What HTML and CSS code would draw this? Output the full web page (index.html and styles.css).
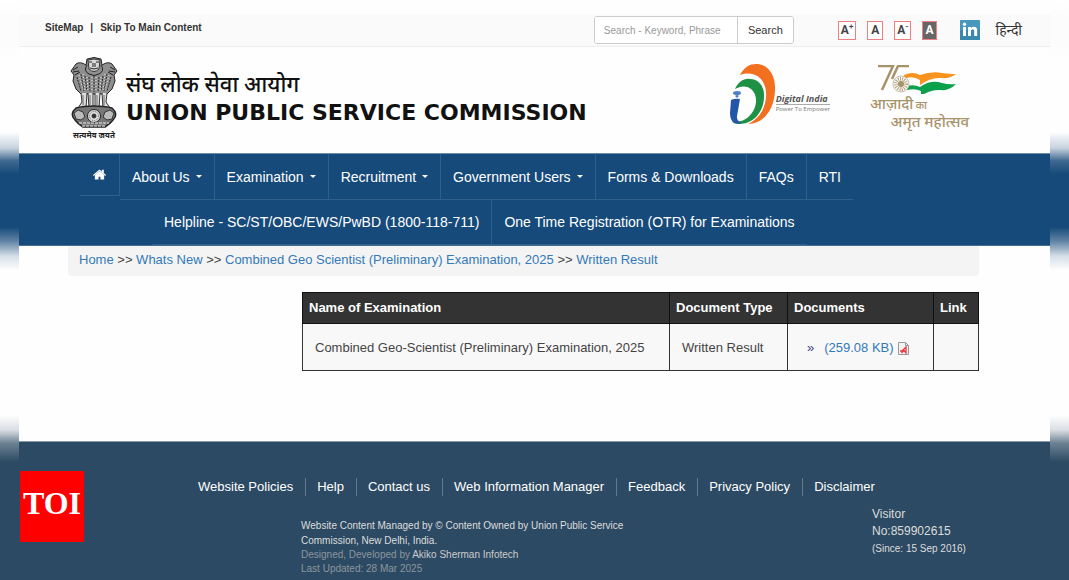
FILE: index.html
```html
<!DOCTYPE html>
<html lang="en">
<head>
<meta charset="utf-8">
<meta name="viewport" content="width=device-width, initial-scale=1">
<title>Union Public Service Commission</title>
<link rel="stylesheet" href="styles.css">
</head>
<body>
<div class="page">
  <div class="topbar">
    <div class="skip"><a href="#">SiteMap</a><span>|</span><a href="#main">Skip To Main Content</a></div>
    <form class="search">
      <input type="text" aria-label="Search" placeholder="Search - Keyword, Phrase">
      <button type="button">Search</button>
    </form>
    <div class="sizes">
      <button type="button">A<sup>+</sup></button>
      <button type="button">A</button>
      <button type="button">A<sup>-</sup></button>
      <button type="button" class="contrast">A</button>
    </div>
    <a class="linkedin" href="#" aria-label="LinkedIn">
      <svg width="20" height="20" viewBox="0 0 20 20"><rect width="20" height="20" rx="1" fill="#4797bd"/><rect y="10" width="20" height="10" fill="#3988ae"/><g fill="#fff"><rect x="3" y="7" width="3" height="9"/><circle cx="4.500" cy="4.300" r="1.700"/><path d="M8 7h3v1.300c.7-1 1.600-1.500 2.900-1.500 2.300 0 3.300 1.500 3.300 3.900V16h-3v-4.800c0-1.200-.4-2-1.400-2-1.200 0-1.800.8-1.800 2.100V16H8z"/></g></svg>
    </a>
    <a class="hindi" href="#" lang="hi">हिन्दी</a>
  </div>

  <header class="masthead">
    <div class="emblem">
      <svg width="48" height="72" viewBox="0 0 48 72" fill="none" stroke="#333" stroke-width="1">
        <path d="M17 2q7-3 14 0l1 6q6-4 10-1l5 7-3 4 1 6-3 8-5 5H11l-5-5-3-8 1-6-3-4 5-7q4-3 10 1z" fill="#8f8f8f" stroke="#222"/>
        <path d="M18 3q6-2 12 0l-1 9q-5 5-10 0z" fill="#d8d8d8"/>
        <path d="M19 5h3m4 0h3M23 6v4m2-4v4M20 11q4 2 8 0M17 8q-4 6 2 9 5 3 10 0 6-3 2-9" stroke="#222"/>
        <path d="M3 13l5-3m-5 5 6-1m-4 4 5-3M45 13l-5-3m5 5-6-1m4 4-5-3" stroke="#222"/>
        <path d="M7 20l4 14M11 17l3 17M15 19l2 15M19 20l1 15M24 19v16M29 20l-1 15M33 19l-2 15M37 17l-3 17M41 20l-4 14" stroke="#292929" stroke-dasharray="2 1"/>
        <path d="M9 18l4 15M13 17l2 17M17 20l1 15M22 20v15M26 20v15M31 20l-1 15M35 17l-2 17M39 18l-4 15" stroke="#eee" stroke-dasharray="1 2"/>
        <path d="M11 36l1 9-4 6h8l1-15M18 36l1 15h4V36M25 36v15h4l1-15M32 36l1 15h7l-4-6 1-9" fill="#ddd" stroke="#333"/>
        <path d="M13 38v10M20 38v10M27 38v10M34 38v10" stroke="#666"/>
        <path d="M6 51q-7 6-1 12 3 4 8 7h22q5-3 8-7 6-6-1-12-7-2-18-2T6 51z" fill="#777" stroke="#222" stroke-width="1.500"/>
        <path d="M4 56l4-3 5 2 2 5-4 3-5-1zM44 56l-4-3-5 2-2 5 4 3 5-1z" fill="#bbb"/>
        <circle cx="24" cy="59" r="6.500" fill="#ddd" stroke="#222"/><circle cx="24" cy="59" r="4.500" stroke="#666" stroke-dasharray="1 1"/><circle cx="24" cy="59" r="2" fill="#333"/>
        <path d="M9 66h30M12 69h24" stroke="#eee" stroke-dasharray="3 1"/>
      </svg>
      <span lang="hi">सत्यमेव जयते</span>
    </div>
    <div class="brand">
      <div class="brand-hi" lang="hi">संघ लोक सेवा आयोग</div>
      <h1>UNION PUBLIC SERVICE COMMISSION</h1>
    </div>
    <div class="digital">
      <svg width="46" height="62" viewBox="0 0 46 62">
        <path d="M10 12C14 4 20 1 26 1 39 1 46 13 45 28 44 46 35 60 18 61 31 55 37 42 36 29 35 16 25 7 10 12z" fill="#f37021"/>
        <path d="M5 26C8 19 14 15 20 16 29 16 35 24 34 35 33 50 23 61 9 61 5 61 3 60 2 58 14 62 27 49 26 36 25 25 15 20 5 26z" fill="#1f9145"/>
        <path d="M1 37q4-2 9-1L7 53q-1 5 5 7-5 2-9-1-3-3-3-9z" fill="#2456a8"/>
        <ellipse cx="7" cy="30" rx="4" ry="2" fill="#4f82c5"/><path d="M5 33q2-2 4 0l-2 2z" fill="#4f82c5"/>
      </svg>
      <div><b>Digital India</b><small>Power To Empower</small></div>
    </div>
    <div class="azadi">
      <svg width="88" height="29" viewBox="0 1 88 29">
        <path d="M2 2h15L6 26M33 2H22l-6 13" fill="none" stroke="#a8926a" stroke-width="2.500"/>
        <path d="M28 11q9-4 16 0 12-4 22-2 9 1 14 1-6 5-15 4-10-1-21 7v-5q-8-5-16-1z" fill="#f7931e"/>
        <path d="M31 22q7-2 13 1 11-8 22-4 7 2 14 1-7 7-15 6-10-1-20 6v-5q-6-3-14-1z" fill="#0ba04b"/>
        <circle cx="25" cy="20" r="8" fill="#fff" stroke="#c9bca2"/><circle cx="25" cy="20" r="5" fill="none" stroke="#b5a482" stroke-width="4" stroke-dasharray="1 1"/><circle cx="25" cy="20" r="3" fill="#a8926a"/>
      </svg>
      <div lang="hi">आज़ादी<small>का</small></div>
      <div lang="hi" class="azadi-second">अमृत महोत्सव</div>
    </div>
  </header>

  <nav class="nav" aria-label="Main">
    <ul>
      <li class="home"><a href="#" aria-label="Home"><svg width="14" height="11" viewBox="0 0 14 11" fill="#fff"><path d="M7 0l2.600 2.200V.5h2v3.500L14 6l-.8 1L7 1.800.8 7 0 6z"/><path d="M7 2l5 4v5H8V8H6v3H2V6z"/></svg></a></li>
      <li><a href="#">About Us<i></i></a></li>
      <li><a href="#">Examination<i></i></a></li>
      <li><a href="#">Recruitment<i></i></a></li>
      <li><a href="#">Government Users<i></i></a></li>
      <li><a href="#">Forms &amp; Downloads</a></li>
      <li><a href="#">FAQs</a></li>
      <li><a href="#">RTI</a></li>
    </ul>
    <ul class="second">
      <li><a href="#">Helpline - SC/ST/OBC/EWS/PwBD (1800-118-711)</a></li>
      <li><a href="#">One Time Registration (OTR) for Examinations</a></li>
    </ul>
  </nav>

  <main id="main">
    <div class="crumbs"><a href="#">Home</a> &gt;&gt; <a href="#">Whats New</a> &gt;&gt; <a href="#">Combined Geo Scientist (Preliminary) Examination, 2025</a> &gt;&gt; <a href="#">Written Result</a></div>
    <table>
      <colgroup><col><col class="c-type"><col class="c-docs"><col class="c-link"></colgroup>
      <thead><tr><th>Name of Examination</th><th>Document Type</th><th>Documents</th><th>Link</th></tr></thead>
      <tbody><tr><td>Combined Geo-Scientist (Preliminary) Examination, 2025</td><td>Written Result</td>
      <td><div class="doc"><span>»</span><a href="#">(259.08 KB)</a><svg width="11" height="13" viewBox="0 0 11 13"><path d="M.5.500h7l3 3v9H.5z" fill="#f3f3f3" stroke="#999"/><path d="M7.500.500v3h3" fill="none" stroke="#999"/><path d="M2 9h2l4-4v6L6 8.500 3.500 11" fill="none" stroke="#e8383d" stroke-width="1.300"/></svg></div></td><td></td></tr></tbody>
    </table>
  </main>

  <footer>
    <ul>
      <li><a href="#">Website Policies</a></li><li><a href="#">Help</a></li><li><a href="#">Contact us</a></li><li><a href="#">Web Information Manager</a></li><li><a href="#">Feedback</a></li><li><a href="#">Privacy Policy</a></li><li><a href="#">Disclaimer</a></li>
    </ul>
    <div class="foot-info">
      <div class="credits">
        <p>Website Content Managed by © Content Owned by Union Public Service Commission, New Delhi, India.</p>
        <p class="dim">Designed, Developed by <a href="#">Akiko Sherman Infotech</a><br>Last Updated: 28 Mar 2025</p>
      </div>
      <div class="visitor">Visitor<br>No:859902615<small>(Since: 15 Sep 2016)</small></div>
    </div>
    <div class="toi">TOI</div>
  </footer>
</div>
</body>
</html>
```
FILE: styles.css
```css
* { box-sizing: border-box; }
body {
  margin: 0;
  min-height: 100vh;
  font: 13px/18px "Liberation Sans", Arial, sans-serif;
  color: #444;
  background: linear-gradient(#fff 0, #fcfcfc 20px, #fcfcfc 40px, #fefefe 60px, #fefefe 132px, #c7d2de 148px, #3e688f 161px, #164a7a 174px, #164a7a 227px, #5f82a3 241px, #d5dee7 256px, #fefefe 270px, #fefefe 415px, #d9dfe4 430px, #6d8294 443px, #2c4a63 462px);
}
a { color: inherit; text-decoration: none; }
ul { list-style: none; margin: 0; padding: 0; display: flex; }
p, h1 { margin: 0; }

.page { margin: 0 19px; background: #fefefe; display: flex; flex-direction: column; min-height: 100vh; padding-top: 14px; }

.topbar { display: flex; align-items: center; height: 33px; padding: 0 28px 0 26px; background: #fafafa; border-bottom: 1px solid #eee; }
.skip { display: flex; gap: 7px; margin: 0 auto 5px 0; font-size: 10px; line-height: 12px; font-weight: bold; color: #333; }
.search { display: flex; width: 200px; height: 28px; margin-right: 44px; border: 1px solid #ccc; border-radius: 3px; background: #fff; overflow: hidden; }
.search input { flex: 1; min-width: 0; border: 0; border-right: 1px solid #ccc; padding: 0 9px; font: 10px "Liberation Sans", Arial, sans-serif; background: #fff; }
.search input::placeholder { color: #999; opacity: 1; }
.search button { width: 55px; border: 0; padding: 0; background: #fff; color: #333; font: 11px "Liberation Sans", Arial, sans-serif; }
.sizes { display: flex; gap: 11px; margin-right: 23px; }
.sizes button { height: 19px; min-width: 16px; padding: 0 2px; border: 1px solid #f08080; background: #fff; color: #444; font: bold 12px/14px Roboto, sans-serif; }
.sizes sup { font-size: 8px; line-height: 0; }
.sizes .contrast { min-width: 14px; padding: 0 2px; background: #666; color: #fff; }
.linkedin { height: 20px; margin-right: 16px; }
.hindi { font: 14px/18px "Noto Sans", "Noto Sans Devanagari", sans-serif; color: #333; }

.masthead { display: flex; height: 106px; padding: 10px 81px 0 50px; }
.emblem { display: flex; flex-direction: column; align-items: center; width: 50px; }
.emblem span { font: bold 8px/12px "Noto Sans", "Noto Sans Devanagari", sans-serif; color: #222; white-space: nowrap; }
.brand { margin: 10px auto 0 7px; color: #111; }
.brand-hi { font: 500 22px/32px "Noto Sans", "Noto Sans Devanagari", sans-serif; }
.brand h1 { font: bold 22px/28px "DejaVu Sans", sans-serif; white-space: nowrap; }
.digital { display: flex; margin: 6px 40px 0 0; }
.digital div { margin-top: 30px; display: flex; flex-direction: column; }
.digital b { font: italic bold 9px/11px "Open Sans", sans-serif; color: #555; border-bottom: 1px solid #aaa; }
.digital small { font: 6px/8px "Open Sans", sans-serif; color: #777; }
.azadi { width: 99px; margin-top: 8px; color: #a8926a; font: 500 15px/18px "Noto Sans", "Noto Sans Devanagari", sans-serif; white-space: nowrap; }
.azadi svg { display: block; margin-left: 6px; }
.azadi small { font-size: 11px; line-height: 1; margin-left: 2px; }
.azadi-second { text-align: right; }

.nav { background: #164a7a; border-top: 1px solid #6c8ba8; border-bottom: 1px solid #456e94; padding: 0 61px 0 61px; color: #fff; font-size: 14px; }
.nav li { border-right: 1px solid #315f8b; border-bottom: 1px solid #315f8b; white-space: nowrap; }
.nav li:last-child { border-right: 0; }
.nav a { display: flex; align-items: center; height: 45px; padding: 0 12px; }
.nav .home { align-self: flex-start; width: 40px; }
.nav .home a { height: 41px; padding: 0 13px; }
.nav i { margin-left: 6px; border: 3px solid transparent; border-top-color: #fff; border-bottom: 0; }
.nav .second { margin-left: 72px; }
.nav .second a { height: 44px; }

main { padding: 0 71px 0 49px; margin-bottom: 70px; }
.crumbs { height: 30px; padding: 5px 11px; background: #f4f4f4; border-radius: 0 0 4px 4px; }
.crumbs a, .doc a { color: #337ab7; }
table { width: calc(100% - 234px); margin: 16px 0 0 234px; border-collapse: collapse; table-layout: fixed; }
.c-type { width: 118px; }
.c-docs { width: 146px; }
.c-link { width: 45px; }
th { height: 31px; padding: 0 6px; background: #333; color: #fff; text-align: left; border: 1px solid #111; }
td { height: 47px; padding: 2px 12px 0; background: #f8f8f8; border: 1px solid #333; }
.doc { display: flex; align-items: center; padding-left: 7px; }
.doc span { color: #448; margin-right: 10px; }
.doc svg { margin-left: 4px; }

footer { position: relative; flex: 1; background: #2c4a63; border-top: 1px solid #8a9ba9; color: #ddd; padding-top: 36px; }
footer ul { padding-left: 179px; }
footer li { padding-right: 12px; margin-right: 11px; border-right: 1px solid #66788a; color: #fff; white-space: nowrap; }
footer li:last-child { border: 0; margin: 0; }
.foot-info { display: flex; justify-content: space-between; padding: 10px 62px 0 282px; }
.credits { width: 330px; padding-top: 12px; font-size: 10px; line-height: 15px; }
.dim { color: #8d969e; line-height: 14px; }
.dim a { color: #ccc; }
.visitor { width: 116px; font-size: 12px; line-height: 17px; }
.visitor small { display: block; font-size: 10px; }
.toi { position: absolute; left: 1px; top: 29px; width: 64px; height: 71px; background: #f00; color: #fff; text-align: center; font: bold 32px/64px "Liberation Serif", serif; }
```
